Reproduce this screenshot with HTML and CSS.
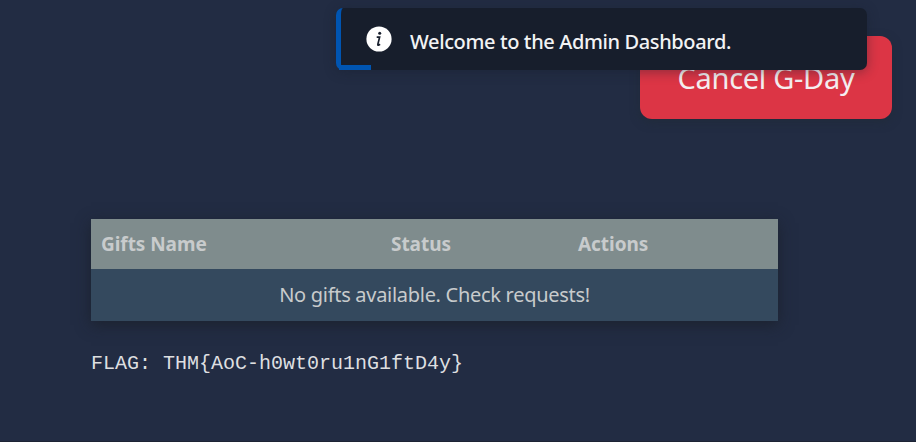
FILE: index.html
```
<!DOCTYPE html>
<html lang="en">
<head>
<meta charset="utf-8">
<title>Admin Dashboard</title>
<link rel="stylesheet" href="styles.css">
</head>
<body>
<header class="topbar"><button class="cancel">Cancel G-Day</button></header>
<main class="content">
  <table class="gifts">
    <colgroup><col class="col-name"><col class="col-status"><col></colgroup>
    <thead><tr><th>Gifts Name</th><th>Status</th><th>Actions</th></tr></thead>
    <tbody><tr><td colspan="3">No gifts available. Check requests!</td></tr></tbody>
  </table>
  <p class="flag">FLAG: THM{AoC-h0wt0ru1nG1ftD4y}</p>
</main>
<div class="toast" role="status">
  <svg class="info" viewBox="0 0 26 26" aria-hidden="true"><circle cx="13" cy="13" r="12.6" fill="#fff"/><circle cx="13.7" cy="7.3" r="1.5" fill="#171e2c"/><path d="M10.7 11.1h2.9l-1.7 7q-.3 1.6 .9 1l1.3-.9" fill="none" stroke="#171e2c" stroke-width="1.7"/></svg>
  <span class="message">Welcome to the Admin Dashboard.</span>
  <span class="progress"></span>
</div>
</body>
</html>
```
FILE: styles.css
```
* { box-sizing: border-box; }
body {
  margin: 0;
  height: 442px;
  overflow: hidden;
  position: relative;
  background: #222c43;
  border-bottom: 1px solid #1d2434;
  font-family: "Noto Sans", sans-serif;
}
.topbar {
  display: flex;
  justify-content: flex-end;
  padding: 36px 24px 0 0;
}
.cancel {
  width: 252px;
  height: 83px;
  padding: 0;
  border: 0;
  border-radius: 12px;
  background: #dc3545;
  color: #f5eef0;
  font: 29px/83px "Noto Sans", sans-serif;
  letter-spacing: -0.3px;
  box-shadow: 0 3px 10px rgba(31, 44, 53, .6);
}
.content { padding: 100px 0 0 91px; }
.gifts {
  width: 687px;
  table-layout: fixed;
  border-collapse: collapse;
  color: #c8cbcc;
  background: #34495e;
  box-shadow: 0 4px 14px rgba(25, 30, 38, .7);
}
.col-name { width: 290px; }
.col-status { width: 187px; }
.gifts th {
  height: 50px;
  padding: 0 10px;
  text-align: left;
  background: #7f8c8d;
  font-size: 19px;
  line-height: 24px;
  font-weight: 700;
  letter-spacing: -0.05px;
}
.gifts td {
  height: 52px;
  padding: 0;
  text-align: center;
  font-size: 20px;
  line-height: 24px;
  letter-spacing: -0.29px;
}
.flag {
  margin: 31px 0 0;
  color: #dedfe0;
  font: 20px/24px "Liberation Mono", monospace;
  white-space: pre;
}
.toast {
  position: absolute;
  left: 336px;
  top: 8px;
  width: 531px;
  height: 62px;
  display: flex;
  align-items: center;
  padding-left: 25px;
  border-left: 5px solid #0055b2;
  border-radius: 7px;
  background: #171e2c;
  box-shadow: 0 2px 12px rgba(23, 30, 44, .4);
}
.info { width: 26px; height: 26px; }
.message {
  margin-left: 18px;
  padding-top: 5px;
  color: #f2f3f4;
  font-size: 20px;
  line-height: 24px;
  font-weight: 500;
  letter-spacing: -0.38px;
  white-space: nowrap;
}
.progress {
  position: absolute;
  left: -2px;
  bottom: 0;
  width: 32px;
  height: 5px;
  background: #0055b2;
}
```
